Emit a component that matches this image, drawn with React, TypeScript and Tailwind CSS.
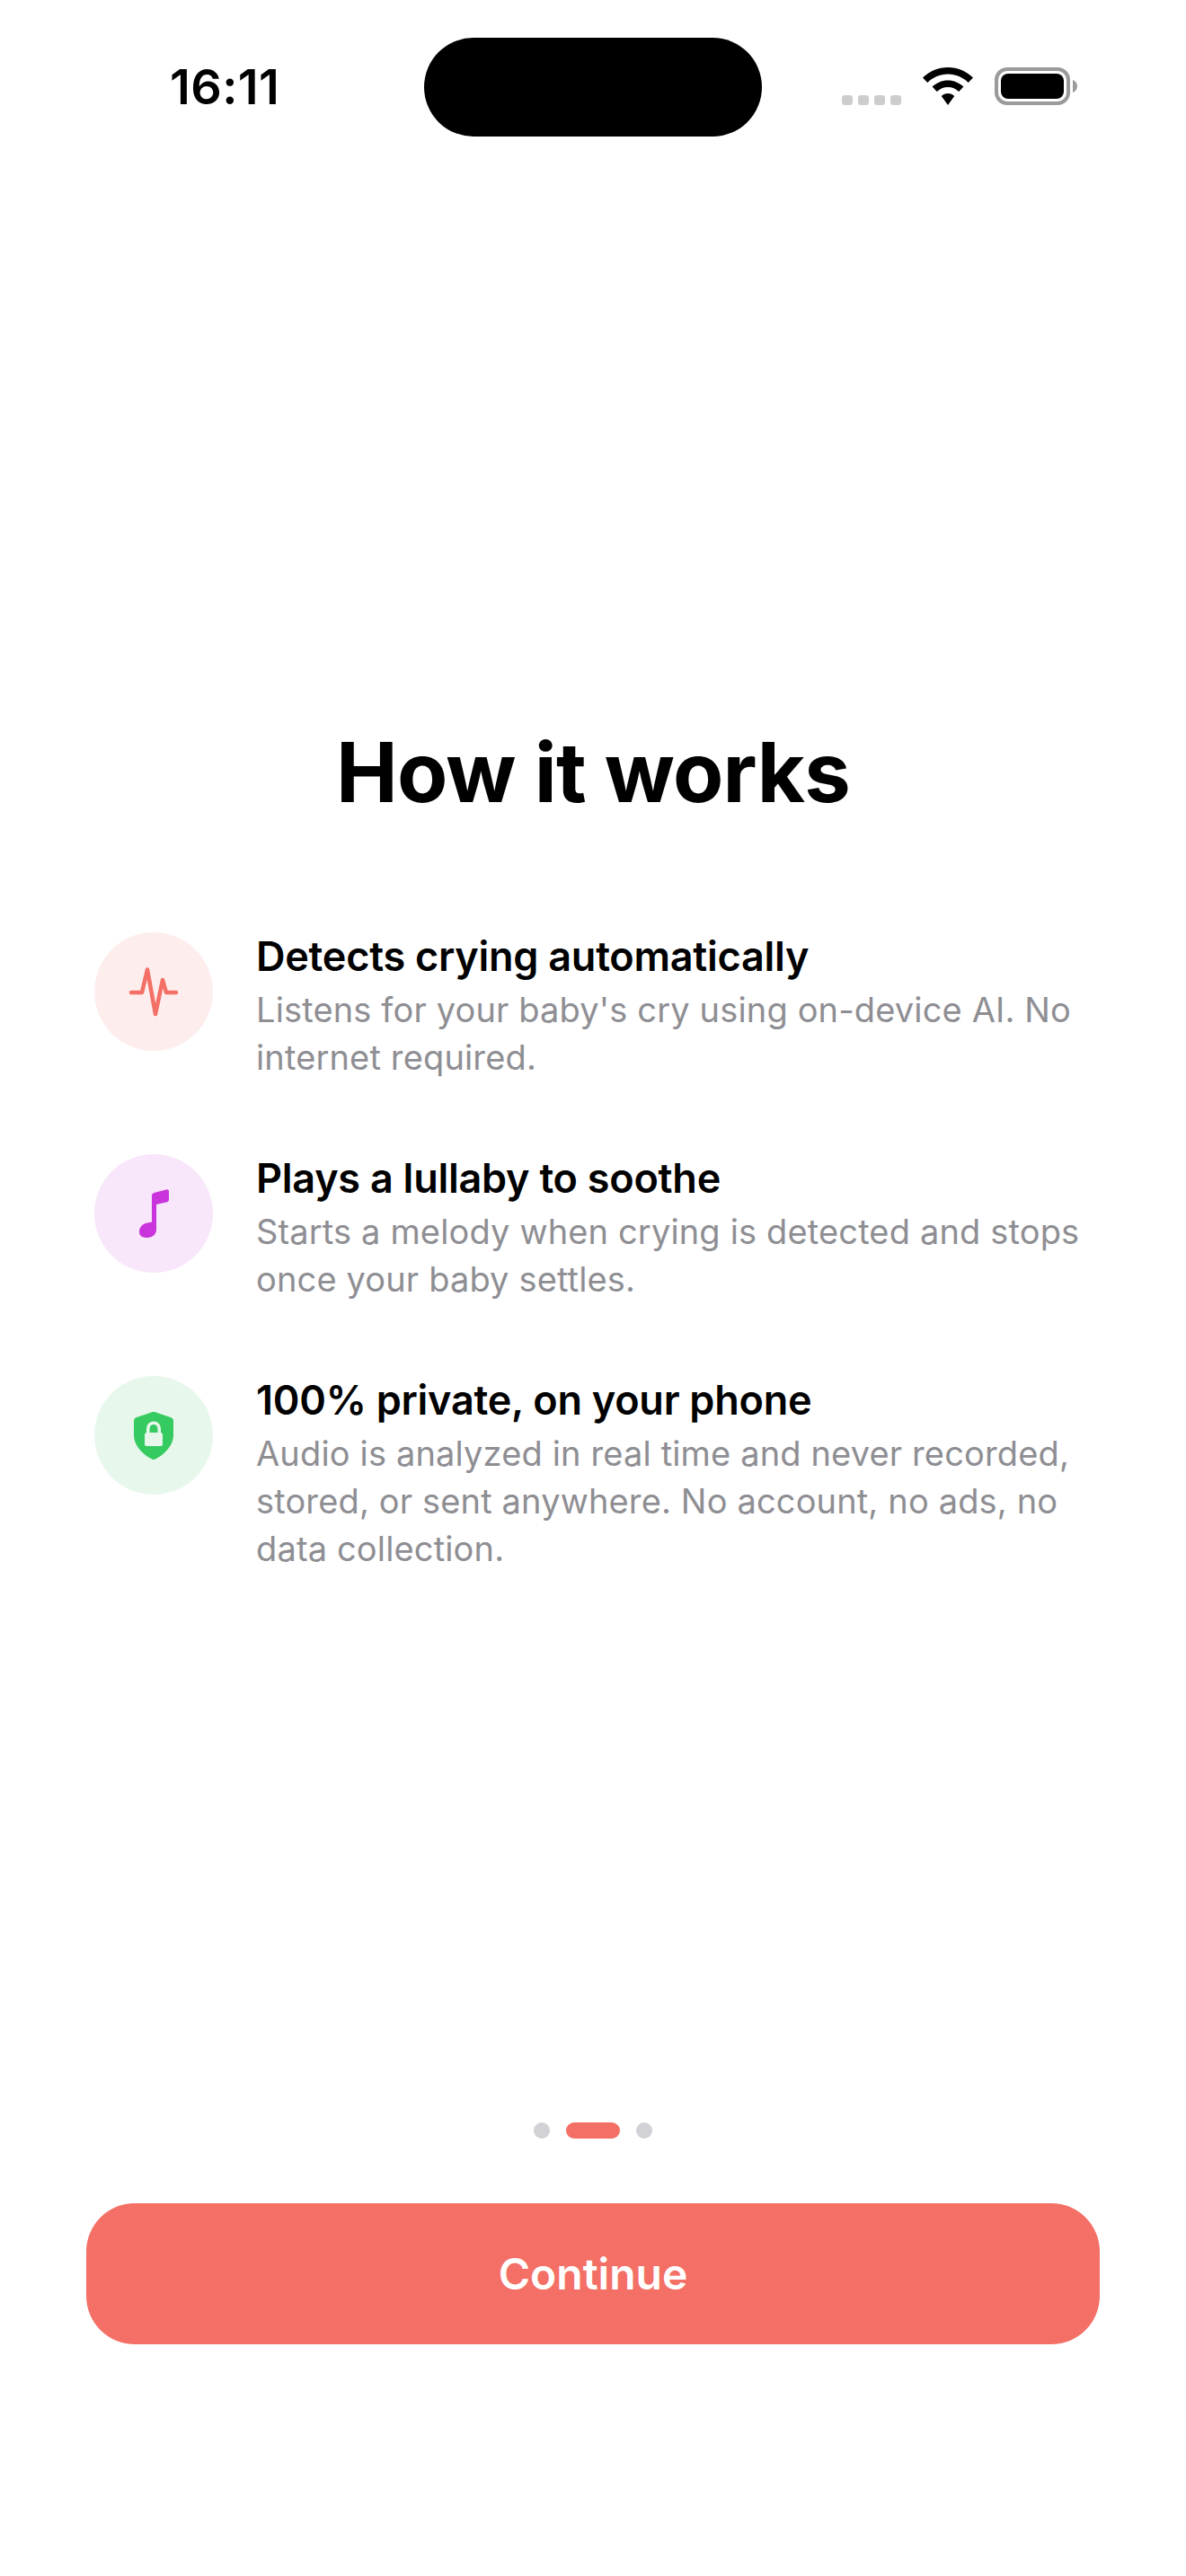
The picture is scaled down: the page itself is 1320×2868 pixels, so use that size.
const FONT = "font-['Inter','Noto_Sans',sans-serif]";

function Wifi() {
  return (
    <svg width="58" height="42" viewBox="0 0 58 42" fill="#000">
      <path d="M29 0C18 0 8.300 4.300 1 11.500L6.300 17C12.200 11.200 20.200 7.600 29 7.600C37.800 7.600 45.800 11.200 51.700 17L57 11.500C49.700 4.300 40 0 29 0Z" />
      <path d="M29 14.500C22.300 14.500 16.200 17.200 11.600 21.600L16.800 27C20 23.900 24.300 22 29 22C33.700 22 38 23.900 41.200 27L46.400 21.600C41.800 17.200 35.700 14.500 29 14.500Z" />
      <path d="M29 29C26.200 29 23.700 30.100 21.800 31.900L29 42L36.200 31.900C34.300 30.100 31.800 29 29 29Z" />
    </svg>
  );
}

function Battery() {
  return (
    <svg width="92" height="42" viewBox="0 0 92 42">
      <rect x="2" y="2" width="80" height="38" rx="12" fill="none" stroke="#9a9a9a" strokeWidth="4" />
      <rect x="7" y="7" width="70" height="28" rx="8" fill="#000" />
      <path d="M87 14C90 15 92 18 92 21C92 24 90 27 87 28Z" fill="#9a9a9a" />
    </svg>
  );
}

function PulseIcon() {
  return (
    <svg width="56" height="56" viewBox="0 0 56 56" fill="none" stroke="#f46f65" strokeWidth="4.500" strokeLinecap="round" strokeLinejoin="round">
      <path d="M3 29H15L21 3.500L30 53L38 15L42 29H53" />
    </svg>
  );
}

function NoteIcon() {
  return (
    <svg width="33" height="54" viewBox="0 0 33 54" fill="#c934dc">
      <path d="M14 7C14 5.500 15 4.500 16.500 4L30 0.500C31.800 0 33 1 33 3V11.500C33 13 32 14 31 14.200L19 17V45C19 50.500 14.500 54 9 54C3.500 54 0 52 0 47.500C0 42 4 38.500 8 37.700L14 36.500Z" />
    </svg>
  );
}

function ShieldIcon() {
  return (
    <svg width="44" height="53" viewBox="0 0 44 53">
      <path d="M22 0C23.500 0 25 0.500 26 1L41 6C43 6.700 44 8 44 10V26C44 38 33 48 24 52.500C22.700 53.200 21.300 53.200 20 52.500C11 48 0 38 0 26V10C0 8 1 6.700 3 6L18 1C19 0.500 20.500 0 22 0Z" fill="#36cb60" />
      <path d="M15.750 24V18.500A6.250 6.250 0 0 1 28.250 18.500V24" fill="none" stroke="#e8f7ec" strokeWidth="3.500" />
      <rect x="12" y="23" width="20" height="15" rx="2.500" fill="#e8f7ec" />
    </svg>
  );
}

const rows = [
  {
    bg: "bg-[#fdeeed]",
    icon: <PulseIcon />,
    title: "Detects crying automatically",
    lines: ["Listens for your baby's cry using on-device AI. No", "internet required."],
  },
  {
    bg: "bg-[#f8e6fa]",
    icon: <NoteIcon />,
    title: "Plays a lullaby to soothe",
    lines: ["Starts a melody when crying is detected and stops", "once your baby settles."],
  },
  {
    bg: "bg-[#e8f7ec]",
    icon: <ShieldIcon />,
    title: "100% private, on your phone",
    lines: ["Audio is analyzed in real time and never recorded,", "stored, or sent anywhere. No account, no ads, no", "data collection."],
  },
];

export default function App() {
  return (
    <div className={`${FONT} flex h-[2868px] w-[1320px] flex-col bg-white text-black`}>
      <div className="flex h-[194px] items-start">
        <div className="flex h-[152px] w-[472px] items-end pb-[30px] pl-[189px]">
          <span className="text-[54px] leading-[50px] font-semibold tracking-[0.4px]">16:11</span>
        </div>
        <div className="mt-[42px] h-[110px] w-[376px] rounded-[55px] bg-black" />
        <div className="mt-[75px] flex items-end pl-[89px]">
          <div className="flex gap-[6px]">
            {[0, 1, 2, 3].map((i) => (
              <div key={i} className="h-[11px] w-[12px] rounded-[3px] bg-[#cdcdcd]" />
            ))}
          </div>
          <div className="ml-[23px] flex">
            <Wifi />
          </div>
          <div className="ml-[23px] flex">
            <Battery />
          </div>
        </div>
      </div>

      <h1 className="mt-[606px] text-center text-[92px] leading-[120px] font-bold tracking-[-0.8px]">How it works</h1>

      <div className="mt-[118px] flex flex-col gap-[81px] pl-[105px]">
        {rows.map((r) => (
          <div key={r.title} className="flex h-[166px] items-start">
            <div className={`flex h-[132px] w-[132px] shrink-0 items-center justify-center rounded-full ${r.bg}`}>
              {r.icon}
            </div>
            <div className="ml-[48px]">
              <div className="mb-[6px] text-[45px] leading-[54px] font-semibold tracking-[-0.25px]">{r.title}</div>
              {r.lines.map((l) => (
                <div key={l} className="text-[38px] leading-[53px] tracking-[0.15px] whitespace-nowrap text-[#8e8e93]">
                  {l}
                </div>
              ))}
            </div>
          </div>
        ))}
      </div>

      <div className="mt-auto flex items-center justify-center gap-[18px]">
        <div className="h-[18px] w-[18px] rounded-full bg-[#d1d1d6]" />
        <div className="h-[18px] w-[60px] rounded-full bg-[#f46f65]" />
        <div className="h-[18px] w-[18px] rounded-full bg-[#d1d1d6]" />
      </div>

      <div className="mt-[72px] mb-[258px] px-[96px]">
        <button className="flex h-[157px] w-full items-center justify-center rounded-[54px] bg-[#f46f65] text-[48px] font-semibold text-white">
          Continue
        </button>
      </div>
    </div>
  );
}
